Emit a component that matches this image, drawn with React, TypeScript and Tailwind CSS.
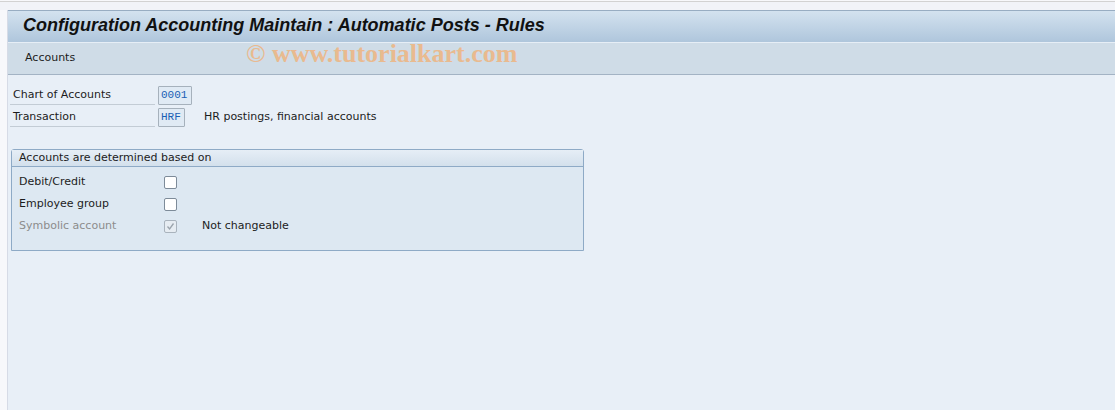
import React from "react"

const font = { fontFamily: '"DejaVu Sans", "Liberation Sans", sans-serif' }

function Checkbox({ checked, disabled }: { checked?: boolean; disabled?: boolean }) {
  return (
    <div
      className={`w-[13px] h-[13px] rounded-[2px] border flex items-center justify-center ${
        disabled ? "bg-[#e6ecf2] border-[#a9b3bd]" : "bg-white border-[#7d8b99]"
      }`}
    >
      {checked && (
        <svg width="9" height="9" viewBox="0 0 9 9">
          <path d="M1.5 4.5 L3.6 7 L7.5 1.5" fill="none" stroke="#9aa3ac" strokeWidth="1.3" />
        </svg>
      )}
    </div>
  )
}

function FieldRow({ label, value, width, text }: { label: string; value: string; width: string; text?: string }) {
  return (
    <div className="flex items-center h-[22px]">
      <div className="w-[145px] h-[20px] border-b border-[#c3ccd5] pl-[3px] text-[11px] leading-[20px] text-[#1c1c1c]">
        {label}
      </div>
      <div
        className={`${width} ml-[3px] h-[19px] border border-[#a6b1bc] bg-[#e0eaf4] rounded-[1px] text-[11px] leading-[17px] text-[#1a5fb4] pl-[2px]`}
        style={{ fontFamily: '"Liberation Mono", monospace' }}
      >
        {value}
      </div>
      {text && <div className="ml-[19px] text-[11px] text-[#1c1c1c]">{text}</div>}
    </div>
  )
}

function CheckRow({ label, checked, disabled, note }: { label: string; checked?: boolean; disabled?: boolean; note?: string }) {
  return (
    <div className="flex items-center h-[22px]">
      <div className={`w-[152px] pl-[7px] text-[11px] ${disabled ? "text-[#8c8c8c]" : "text-[#1c1c1c]"}`}>{label}</div>
      <Checkbox checked={checked} disabled={disabled} />
      {note && <div className="ml-[25px] text-[11px] text-[#1c1c1c]">{note}</div>}
    </div>
  )
}

export default function App() {
  return (
    <div className="w-[1115px] h-[410px] bg-[#f7f8fb] flex flex-col overflow-hidden" style={font}>
      <div className="h-[9px] mt-[1px] border-t border-[#d2d2d2] bg-[#f1f3f8]" />
      <div className="flex flex-1">
        <div className="w-[8px] border-r border-[#d6dbe6] bg-[#f7f8fb]" />
        <div className="flex-1 flex flex-col bg-[#e8eff7]">
          <div className="h-[32px] border-t border-[#98adc2] bg-gradient-to-b from-[#d3e2ef] to-[#afc6dc] flex items-center pl-[15px] pb-[3px]">
            <span
              className="text-[18px] font-bold italic text-[#111]"
              style={{ fontFamily: '"Liberation Sans", sans-serif' }}
            >
              Configuration Accounting Maintain : Automatic Posts - Rules
            </span>
          </div>
          <div className="h-[33px] border-t border-[#e6eef6] border-b border-b-[#a3b3c4] bg-[#cfdce7] flex items-center pl-[17px] relative">
            <span className="text-[11px] text-[#1c1c1c]">Accounts</span>
            <span
              className="absolute left-[238px] top-[-2px] leading-none text-[26px] font-bold text-[#f0b27a] opacity-80"
              style={{ fontFamily: '"Liberation Serif", serif' }}
            >
              © www.tutorialkart.com
            </span>
          </div>
          <div className="pt-[9px] pl-[2px] flex flex-col">
            <FieldRow label="Chart of Accounts" value="0001" width="w-[34px]" />
            <FieldRow label="Transaction" value="HRF" width="w-[27px]" text="HR postings, financial accounts" />
          </div>
          <div className="ml-[3px] mt-[21px] w-[573px] h-[102px] border border-[#8eaac6] rounded-t-[3px] bg-[#dde8f2] flex flex-col">
            <div className="h-[17px] border-b border-[#8eaac6] bg-gradient-to-b from-[#e6eef6] to-[#d3e0ec] pl-[7px] text-[11px] leading-[16px] text-[#1c1c1c]">
              Accounts are determined based on
            </div>
            <div className="pt-[4px] flex flex-col">
              <CheckRow label="Debit/Credit" />
              <CheckRow label="Employee group" />
              <CheckRow label="Symbolic account" checked disabled note="Not changeable" />
            </div>
          </div>
        </div>
      </div>
    </div>
  )
}
